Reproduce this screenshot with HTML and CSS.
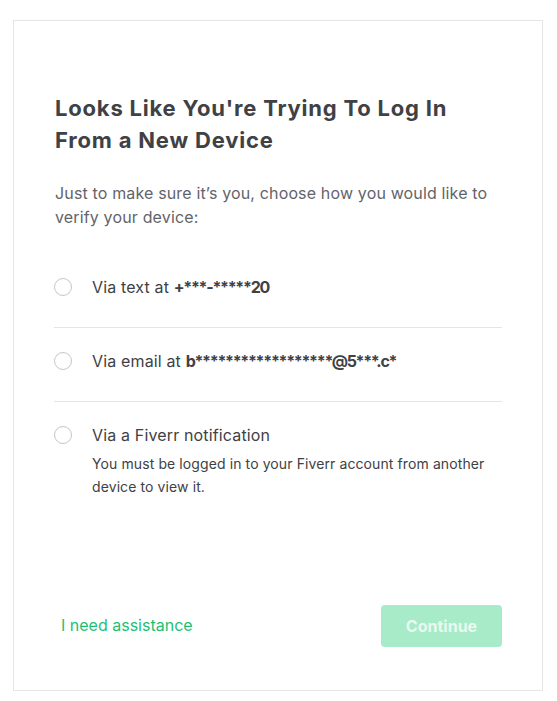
FILE: index.html
```html
<!DOCTYPE html>
<html lang="en">
<head>
<meta charset="utf-8">
<title>Verify your device</title>
<link rel="stylesheet" href="styles.css">
</head>
<body>
<div class="card">
  <h1 class="title">Looks Like You're Trying To Log In From a New Device</h1>
  <p class="intro">Just to make sure it’s you, choose how you would like to verify your device:</p>
  <ul class="options">
    <li class="option">
      <span class="radio"></span>
      <div class="option-body">
        <div class="label">Via text at <b>+***-*****20</b></div>
      </div>
    </li>
    <li class="option">
      <span class="radio"></span>
      <div class="option-body">
        <div class="label">Via email at <b>b******************@5***.c*</b></div>
      </div>
    </li>
    <li class="option">
      <span class="radio"></span>
      <div class="option-body">
        <div class="label">Via a Fiverr notification</div>
        <div class="desc">You must be logged in to your Fiverr account from another device to view it.</div>
      </div>
    </li>
  </ul>
  <div class="footer">
    <a class="help" href="#">I need assistance</a>
    <button class="continue" type="button" disabled>Continue</button>
  </div>
</div>
</body>
</html>
```
FILE: styles.css
```css
* { box-sizing: border-box; }
html, body { margin: 0; padding: 0; background: #fff; }
body {
  font-family: "Inter", "Noto Sans", sans-serif;
  color: #404145;
  padding: 20px 14px 10px 13px;
}
.card {
  width: 530px;
  height: 671px;
  border: 1px solid #e4e5e7;
  padding: 71px 40px 43px 40px;
  display: flex;
  flex-direction: column;
}
.title {
  margin: 0 0 25px 1px;
  font-size: 22px;
  line-height: 32px;
  font-weight: 700;
  letter-spacing: 0.8px;
  color: #404145;
}
.intro {
  margin: 0 0 24px 1px;
  font-size: 16px;
  line-height: 24px;
  letter-spacing: 0.15px;
  color: #62646a;
}
.options {
  list-style: none;
  margin: 0;
  padding: 0;
}
.option {
  display: flex;
  align-items: flex-start;
  gap: 20px;
  padding: 22px 0 28px;
}
.option + .option {
  border-top: 1px solid #e4e5e7;
  padding-top: 21px;
}
.radio {
  flex: none;
  width: 18px;
  height: 18px;
  margin-top: 3px;
  border: 1px solid #c5c6c9;
  border-radius: 50%;
  background: #fff;
}
.label {
  font-size: 16px;
  line-height: 24px;
  letter-spacing: 0.15px;
  color: #404145;
}
.label b {
  font-weight: 700;
  letter-spacing: -1.3px;
}
.desc {
  margin-top: 5px;
  font-size: 14px;
  line-height: 23px;
  letter-spacing: 0.1px;
  color: #404145;
}
.footer {
  margin-top: auto;
  display: flex;
  justify-content: space-between;
  align-items: center;
}
.help {
  margin-top: -2px;
  padding: 0 7px;
  font-size: 16px;
  line-height: 24px;
  color: #1dbf73;
  text-decoration: none;
}
.continue {
  width: 121px;
  height: 42px;
  border: 0;
  border-radius: 4px;
  background: #a7ebc9;
  color: rgba(255, 255, 255, 0.75);
  font-family: inherit;
  font-size: 16px;
  font-weight: 700;
}
```
